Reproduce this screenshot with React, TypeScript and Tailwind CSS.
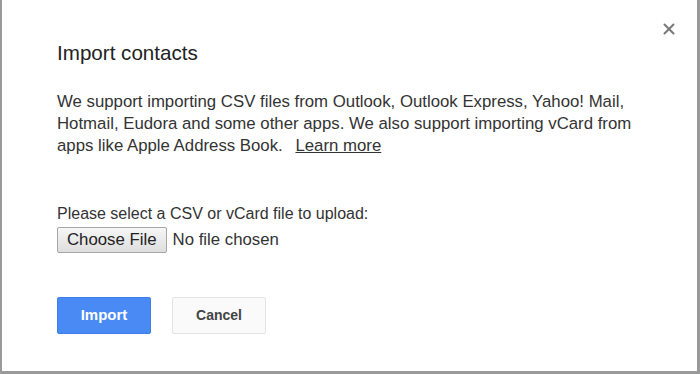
import { X } from 'lucide-react';

export default function App() {
  return (
    <div className="w-[700px] h-[374px] bg-white border-l-2 border-r-[3px] border-b-[3px] border-[#9a9a9a] font-['Liberation_Sans',Arial,sans-serif] text-[#222] relative">
      <button
        type="button"
        aria-label="Close"
        className="absolute right-[19px] top-[20px] text-[#7a7a7a]"
      >
        <X className="w-[18px] h-[18px]" strokeWidth={2.75} />
      </button>

      <div className="pl-[55px] pt-[40px]">
        <h1 className="text-[20.6px] leading-[26px]">Import contacts</h1>

        <p className="mt-[25px] text-[16.8px] leading-[22px] text-[#333]">
          We support importing CSV files from Outlook, Outlook Express, Yahoo! Mail,
          <br />
          Hotmail, Eudora and some other apps. We also support importing vCard from
          <br />
          apps like Apple Address Book.{' '}
          <a href="#" className="ml-[8px] underline text-[#333]">
            Learn more
          </a>
        </p>

        <p className="mt-[47px] text-[16px] leading-[20px] text-[#333]">
          Please select a CSV or vCard file to upload:
        </p>
        <div className="flex items-center gap-[6px] mt-[3px]">
          <button
            type="button"
            className="h-[26px] px-[9px] border border-[#a6a6a6] rounded-[2px] bg-gradient-to-b from-[#f6f6f6] to-[#dedede] text-[16.8px] leading-none text-[#222]"
          >
            Choose File
          </button>
          <span className="text-[16.8px] text-[#333]">No file chosen</span>
        </div>

        <div className="flex gap-[21px] mt-[44px]">
          <button
            type="button"
            className="w-[94px] h-[37px] rounded-[2px] bg-[#4a8af4] border border-[#3f7fe8] text-white text-[15px] font-bold"
          >
            Import
          </button>
          <button
            type="button"
            className="w-[94px] h-[37px] rounded-[2px] bg-[#fafafa] border border-[#e3e3e3] text-[#444] text-[14px] font-bold"
          >
            Cancel
          </button>
        </div>
      </div>
    </div>
  );
}
